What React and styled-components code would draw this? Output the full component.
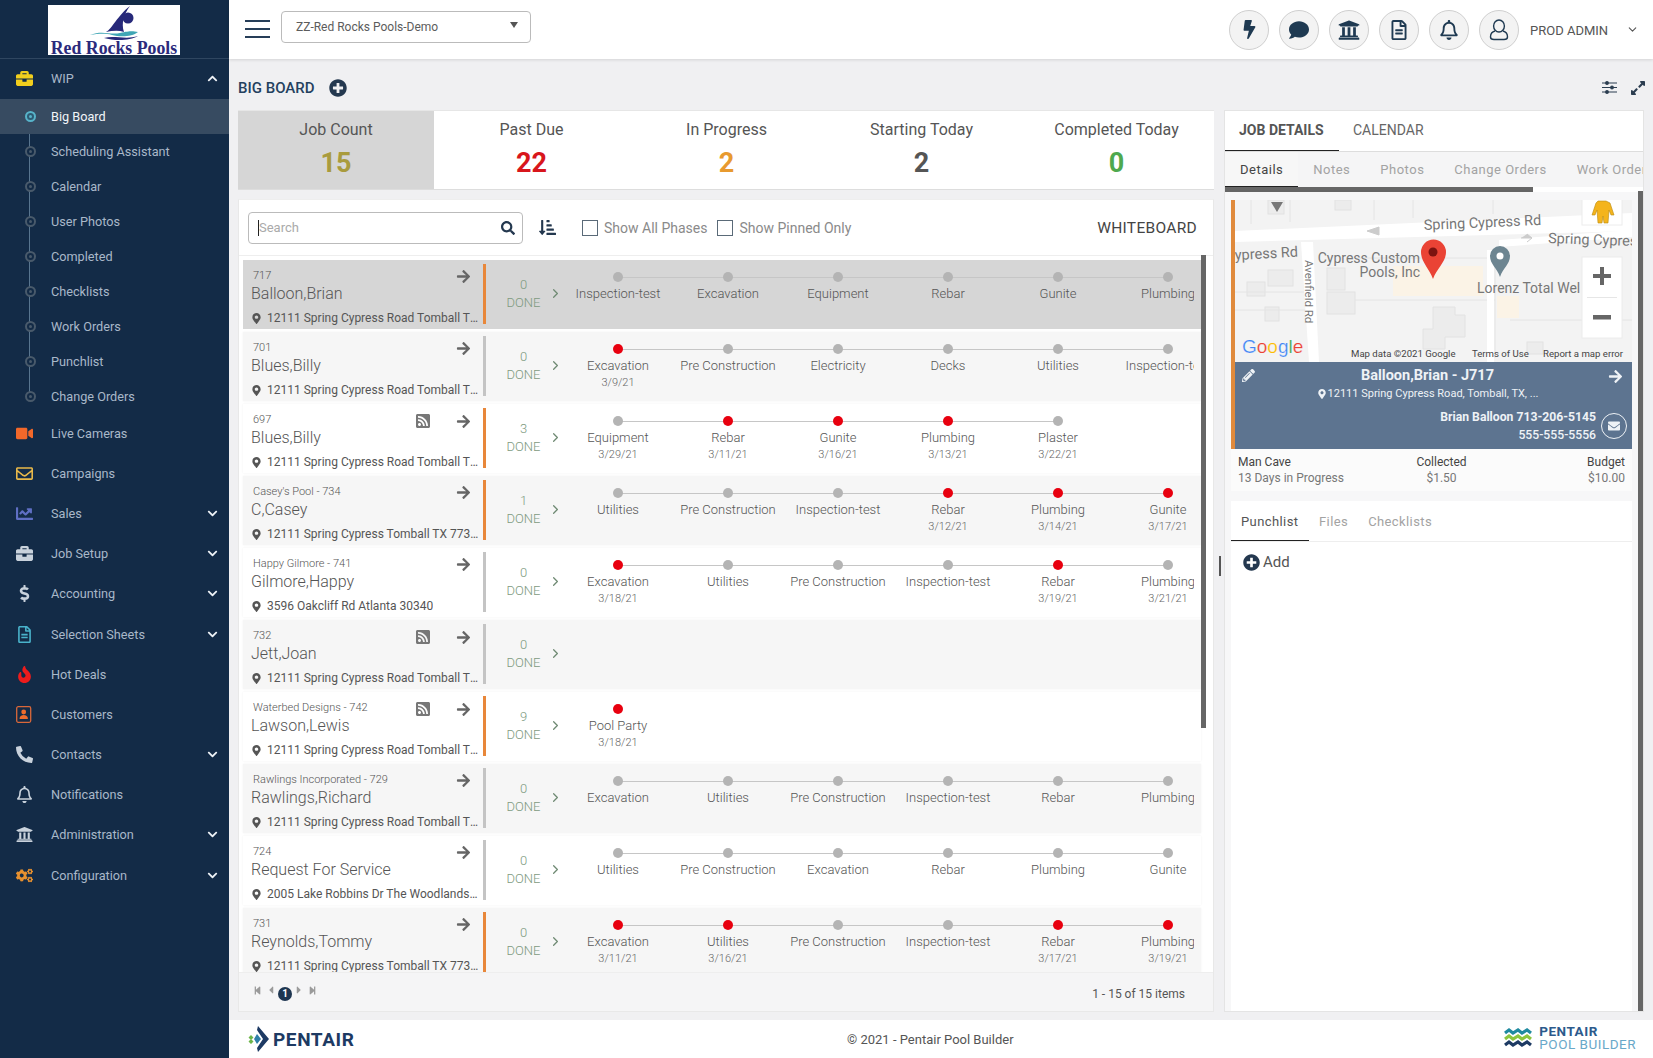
import React from "react";
import styled, { createGlobalStyle } from "styled-components";
import {
  FaBolt, FaComment, FaUniversity, FaRegFileAlt, FaRegBell, FaBriefcase, FaVideo, FaRegEnvelope,
  FaChartLine, FaDollarSign, FaFire, FaPhoneAlt, FaCogs, FaChevronUp, FaChevronDown,
  FaPlusCircle, FaSearch, FaSortAmountDownAlt, FaArrowRight, FaMapMarkerAlt, FaRssSquare, FaExpandAlt,
  FaPencilAlt, FaStepBackward, FaStepForward, FaCaretLeft, FaCaretRight, FaEnvelope,
} from "react-icons/fa";
import { FiChevronDown, FiChevronRight } from "react-icons/fi";

const Global = createGlobalStyle`
  html, body { margin: 0; padding: 0; height: 100%; overflow: hidden; }
  body { font-family: Roboto, "Liberation Sans", sans-serif; background: #f0f0f2; }
  * { box-sizing: border-box; }
`;

const Shell = styled.div`
  display: grid; grid-template-columns: 229px 1fr; grid-template-rows: 1058px; width: 1653px; height: 1058px; overflow: hidden;
`;
const Side = styled.aside`background: #132b47; display: flex; flex-direction: column; color: #a9b8c9; min-height: 0; overflow: hidden;`;
const LogoBar = styled.div`
  height: 59px; flex: none; border-bottom: 1px solid #2f4660; padding: 5px 0 0 48px;
`;
const LogoBox = styled.div`
  width: 132px; height: 50px; background: #fff; display: flex; flex-direction: column; align-items: center;
  svg { display: block; flex: none; }
`;
const LogoText = styled.div`
  font-family: "Liberation Serif", serif; font-weight: 700; font-size: 17.800px; line-height: 14px; color: #2b2a7c; white-space: nowrap;
`;
const NavItem = styled.div`
  height: ${p => p.$h || 40.2}px; flex: none; display: flex; align-items: center; padding: 0 11px ${p => p.$pb || 0}px 16px; font-size: 12.7px;
`;
const NavIcon = styled.span`
  width: 35px; display: flex; align-items: center; justify-content: flex-start; font-size: 17px; color: ${p => p.$c};
`;
const NavLabel = styled.span`flex: 1;`;
const Chev = styled.span`display: flex; font-size: 11px; color: #eef2f6;`;
const SubNav = styled.div`
  position: relative; flex: none; margin-bottom: -1px;
  &::before { content: ""; position: absolute; left: 29px; top: 17px; bottom: 17px; width: 1px; background: #58758f; }
`;
const SubItem = styled.div`
  height: 35px; display: flex; align-items: center; padding-left: 25px; gap: 15px; font-size: 12.7px;
  position: relative;
  background: ${p => p.$active ? "#374b61" : "transparent"};
  color: ${p => p.$active ? "#f2f5f8" : "#a9b8c9"};
`;
const SubDot = styled.i`
  width: 11px; height: 11px; border-radius: 50%; position: relative; z-index: 1;
  border: 2px solid ${p => p.$active ? "#57b3c9" : "#495a6b"};
  background: ${p => p.$active ? "#2e5b74" : "#132b47"};
  &::after { content: ""; position: absolute; left: 2px; top: 2px; width: 3px; height: 3px; border-radius: 50%; background: ${p => p.$active ? "#57b3c9" : "#495a6b"}; }
`;

const Main = styled.div`display: flex; flex-direction: column; min-width: 0; min-height: 0;`;
const Header = styled.header`
  height: 59px; flex: none; background: #fff; display: flex; align-items: center; padding: 0 14px 0 16px; box-shadow: 0 1px 3px rgba(0,0,0,.12); z-index: 2;
`;
const Burger = styled.div`
  width: 25px; height: 18px; display: flex; flex-direction: column; justify-content: space-between; margin: -2px 11px 0 0;
  i { display: block; height: 2px; background: #263e58; }
`;
const Select = styled.div`
  width: 250px; height: 32px; border: 1px solid #bbb; border-radius: 4px; display: flex; align-items: center; justify-content: space-between; padding: 0 12px 0 14px; font-size: 12px; color: #5c5c5c; margin-top: -5px;
`;
const Caret = styled.i`
  width: 0; height: 0; border-left: 4px solid transparent; border-right: 4px solid transparent; border-top: 6px solid #555; margin-top: -5px;
`;
const HeadRight = styled.div`margin-left: auto; display: flex; align-items: center; gap: 10px;`;
const Round = styled.div`
  width: 40px; height: 40px; border-radius: 50%; background: #f3f3f3; border: 1px solid #cfcfcf; display: flex; align-items: center; justify-content: center; color: #1f3a52; font-size: ${p => p.$s || 20}px;
`;
const User = styled.span`font-size: 13px; color: #555; margin: 2px 0 0 1px; width: 86px; display: inline-block;`;

const Content = styled.div`flex: 1; min-height: 0; display: flex; flex-direction: column; padding: 0 9px 8px 9px; overflow: hidden;`;
const TitleBar = styled.div`height: 51px; flex: none; display: flex; align-items: center; padding-top: 6px; font-size: 15px; font-weight: 500; color: #24415f;`;
const PlusBtn = styled.span`display: flex; margin-left: 14px; font-size: 18px; color: #24384f;`;
const Tools = styled.div`margin-left: auto; display: flex; align-items: center; gap: 13px; margin-right: -2px; color: #2b3d50; font-size: 16px;`;

const Columns = styled.div`flex: 1; min-height: 0; display: grid; grid-template-columns: 976px 420px; gap: 10px; position: relative;`;
const Grip = styled.i`position: absolute; left: 980.5px; top: 446px; width: 2px; height: 20px; background: #555;`;
const Left = styled.div`display: flex; flex-direction: column; gap: 9px; min-height: 0;`;
const Stats = styled.div`display: grid; grid-template-columns: 196px repeat(4, 1fr); height: 80px; background: #fff; border-bottom: 1px solid #ddd; flex: none; border-top: 1px solid #e6e6e6;`;
const Stat = styled.div`
  display: flex; flex-direction: column; align-items: center; padding-top: 7px; background: ${p => p.$on ? "#d6d6d6" : "transparent"};
`;
const StatLabel = styled.div`font-size: 16px; line-height: 24px; color: #555;`;
const StatNum = styled.div`font-size: 27px; line-height: 36px; font-weight: 700; color: ${p => p.$c}; margin-top: 3px;`;
const Board = styled.div`flex: 1; min-height: 0; background: #fff; display: flex; flex-direction: column; position: relative; border: 1px solid #e8e8e8; border-top: 1px solid #eee;`;
const Toolbar = styled.div`height: 56px; flex: none; display: flex; align-items: center; padding: 0 16px 0 9px; border-bottom: 1px solid #eee;`;
const SearchBox = styled.div`
  width: 275px; height: 32px; border: 1px solid #bbb; border-radius: 4px; display: flex; align-items: center; justify-content: space-between; padding: 0 7px 0 9px; font-size: 13px; color: #222;
`;
const Placeholder = styled.span`color: #aaa; border-left: 1px solid #222; line-height: 16px; font-size: 13px;`;
const SortBtn = styled.span`display: flex; margin: 0 26px 0 16px; font-size: 17px; color: #24384f;`;
const Check = styled.i`width: 16px; height: 16px; border: 1px solid #5a6a78; background: #fff; display: block; margin-right: 6px;`;
const CheckLabel = styled.span`font-size: 14px; color: #8a8a8a; margin-right: ${p => p.$mr || 0}px;`;
const WB = styled.span`margin-left: auto; font-size: 15.5px; color: #444; letter-spacing: .3px;`;
const List = styled.div`flex: 1; min-height: 0; overflow: hidden; padding: 4px 12px 0 4px;`;
const Row = styled.div`
  height: 69px; margin-bottom: 3px; display: flex; background: ${p => p.$bg}; box-shadow: ${p => p.$sel ? "none" : "0 0 2px rgba(0,0,0,.06)"};
`;
const Info = styled.div`width: 240px; flex: none; padding: 9px 2px 0 8px; position: relative; min-width: 0;`;
const Num = styled.div`font-size: 11px; line-height: 14px; color: #555; padding-left: 2px; height: 14px; font-weight: 300;`;
const Name = styled.div`font-size: 16px; line-height: 22px; color: #555; font-weight: 300; margin-top: 0;`;
const Addr = styled.div`display: flex; align-items: center; gap: 5px; font-size: 12px; line-height: 16px; color: #555; margin-top: 5px; width: 229px; white-space: nowrap;
  svg { flex: none; font-size: 11px; color: #555; }
  span { overflow: hidden; text-overflow: ellipsis; }
`;
const RowIcons = styled.div`position: absolute; right: 12px; top: 9px; display: flex; align-items: center; gap: 25px; font-size: 15px; color: #666;
  svg:first-child:not(:last-child) { color: #777; font-size: 16px; }
`;
const Bar = styled.i`width: 3px; height: 60px; margin-top: 4px; background: ${p => p.$c}; flex: none;`;
const Done = styled.div`
  width: 77px; flex: none; display: flex; align-items: center; padding-left: 12px; color: #7e9a80; font-size: 13px; font-weight: 300;
`;
const DoneText = styled.div`width: 57px; text-align: center; line-height: 18px; margin-top: -1px;`;
const DoneChev = styled.span`display: flex; font-size: 15px; color: #6f8a73; margin-left: -1px; margin-top: -2px;`;
const Timeline = styled.div`flex: 1; min-width: 0; display: flex; overflow: hidden; margin-right: 7px;`;
const Stage = styled.div`
  width: 110px; flex: none; position: relative; text-align: center; padding-top: 26px; font-size: 13px; line-height: 16px; color: #555; font-weight: 300;
  white-space: nowrap;
  &::before { content: ""; position: absolute; left: 50%; top: 12px; width: 10px; height: 10px; margin-left: -5px; border-radius: 50%; background: ${p => p.$red ? "#e8000f" : "#b4b4b4"}; z-index: 1; }
  &:not(:last-child)::after { content: ""; position: absolute; left: 50%; top: 17px; width: 110px; height: 1px; background: #c6c6c6; }
`;
const StageName = styled.div`height: 17px;`;
const StageDate = styled.div`font-size: 11px; color: #666; line-height: 16px; margin-top: 0;`;
const ScrollThumb = styled.i`position: absolute; right: 7px; top: 55px; width: 5px; height: 473px; background: #666;`;
const Pager = styled.div`height: 39px; flex: none; display: flex; align-items: center; padding: 4px 28px 0 14px; background: #f5f5f6; border-top: 1px solid #eee; font-size: 12px; color: #555;`;
const PageIcons = styled.div`display: flex; align-items: center; gap: 3px; font-size: 9px; color: #9a9a9a; margin-top: -8px;`;
const PageNum = styled.span`width: 14px; height: 14px; border-radius: 50%; background: #1e3550; color: #fff; font-size: 10px; font-weight: 700; display: flex; align-items: center; justify-content: center; margin: 7px -2px 0 -2px;`;
const PageInfo = styled.span`margin-left: auto;`;

const Right = styled.div`background: #f7f7f8; display: flex; flex-direction: column; position: relative; min-height: 0; border: 1px solid #e4e4e4;`;
const RightThumb = styled.i`position: absolute; right: 0; top: 80px; width: 5px; bottom: 0; background: #666;`;
const TopTabs = styled.div`height: 41px; flex: none; display: flex; background: #fff; border-bottom: 1px solid #ddd;`;
const TopTab = styled.div`
  padding: 0 15px 3px 14px; display: flex; align-items: center; font-size: 14px; color: ${p => p.$on ? "#555" : "#666"}; font-weight: ${p => p.$on ? 700 : 400};
  ${p => p.$on ? "box-shadow: inset 0 -1px 0 #222; width: 114px;" : ""}
`;
const SubTabs = styled.div`height: 35px; flex: none; display: flex; background: #f5f5f6; overflow: hidden; white-space: nowrap;`;
const SubTab = styled.div`
  padding: 0 15px; display: flex; align-items: center; font-size: 13px; letter-spacing: .5px; color: ${p => p.$on ? "#444" : "#a3a3a3"};
  ${p => p.$on ? "box-shadow: inset 0 -1px 0 #222; background: #f7f7f7;" : ""}
`;
const HBar = styled.div`height: 5px; flex: none; background: #fff; &::after { content: ""; display: block; width: 308px; height: 5px; background: #666; }`;
const Pane = styled.div`flex: 1; min-height: 0; display: flex; flex-direction: column; padding: 8px 11px 0 6px;`;
const JobCard = styled.div`border-left: 4px solid #e08a3c; flex: none;`;
const MapBox = styled.div`height: 162px; overflow: hidden; background: #f4f4f4; svg { display: block; }`;
const Blue = styled.div`height: 87px; background: #5d7490; color: #eef2f6; padding: 4px 4px 0 5px;`;
const BlueTop = styled.div`display: flex; align-items: flex-start; justify-content: space-between; font-size: 14px;`;
const BlueMid = styled.div`flex: 1; text-align: center; padding-right: 8px;`;
const BlueTitle = styled.div`font-size: 14.5px; font-weight: 700; line-height: 19px;`;
const BlueAddr = styled.div`font-size: 11px; line-height: 17px; display: flex; align-items: center; justify-content: center; gap: 1px;`;
const BlueBottom = styled.div`display: flex; justify-content: flex-end; align-items: center; gap: 5px; margin-top: 6px; padding-right: 1px;`;
const Contact = styled.div`text-align: right; font-size: 12.200px; line-height: 18px; font-weight: 500;
  b { font-weight: 700; }
`;
const Mail = styled.span`width: 26px; height: 26px; border-radius: 50%; border: 1px solid #eef2f6; display: flex; align-items: center; justify-content: center; font-size: 12px; flex: none;`;
const JobInfo = styled.div`height: 42px; flex: none; background: #fbfbfb; padding: 5px 7px 0 7px; display: flex; justify-content: space-between; font-size: 12px; line-height: 16px; color: #444;`;
const InfoCol = styled.div`text-align: ${p => p.$a}; width: ${p => p.$w}px; div + div { color: #777; }`;
const Punch = styled.div`flex: 1; min-height: 0; background: #fff; margin-top: 10px;`;
const PunchTabs = styled.div`height: 41px; display: flex; border-bottom: 1px solid #eee;`;
const PunchTab = styled.div`padding: 0 10px; display: flex; align-items: center; font-size: 13px; letter-spacing: .4px; color: ${p => p.$on ? "#555" : "#a3a3a3"};
  ${p => p.$on ? "box-shadow: inset 0 -1px 0 #222; padding: 0 9px 0 10px; width: 78px;" : ""}
`;
const AddRow = styled.div`display: flex; align-items: center; gap: 3px; padding: 11px 12px; font-size: 15px; color: #555; svg { font-size: 17px; color: #24384f; }`;

const Footer = styled.footer`height: 38px; flex: none; background: #fff; display: flex; align-items: center; padding: 0 17px 0 19px;`;
const PentairWord = styled.div`display: flex; align-items: center; gap: 3px; font-size: 19px; font-weight: 700; color: #1d3a63; letter-spacing: .6px; flex: none; width: 108px;`;
const Copy = styled.span`font-size: 13px; color: #555; margin-left: 491px;`;
const PoolLogo = styled.div`display: flex; align-items: center; gap: 6px; margin: -3px 0 0 auto;`;
const PoolText = styled.div`font-size: 13.5px; line-height: 13px; letter-spacing: .5px; font-weight: 700; color: #2c5a8c; span { display: block; font-weight: 400; color: #69a8c9; }`;

const AddressIcon = () => (
  <svg width="16" height="17" viewBox="0 0 16 17">
    <rect x=".7" y=".7" width="14" height="15.600" rx="1.500" fill="none" stroke="#d9673a" strokeWidth="1.300" />
    <circle cx="7.700" cy="6" r="2.400" fill="#ee6c2d" />
    <path d="M3.500 13c0-3 2-4 4.200-4s4.200 1 4.200 4z" fill="#ee6c2d" />
  </svg>
);
const nav1 = [
  [FaVideo, "#f2682a", "Live Cameras"], [FaRegEnvelope, "#e9b94a", "Campaigns"], [FaChartLine, "#5f6fc4", "Sales", 1],
  [FaBriefcase, "#c9d2dc", "Job Setup", 1], [FaDollarSign, "#c9d2dc", "Accounting", 1], [FaRegFileAlt, "#49b2cb", "Selection Sheets", 1],
  [FaFire, "#ee1c1c", "Hot Deals"], [AddressIcon, "#e8692f", "Customers"], [FaPhoneAlt, "#c9d2dc", "Contacts", 1],
  [FaRegBell, "#c9d2dc", "Notifications"], [FaUniversity, "#c9d2dc", "Administration", 1], [FaCogs, "#e8912f", "Configuration", 1],
];
const subs = ["Big Board", "Scheduling Assistant", "Calendar", "User Photos", "Completed", "Checklists", "Work Orders", "Punchlist", "Change Orders"];
const s = (n, d, r) => ({ n, d, r });
const S1 = "12111 Spring Cypress Road Tomball TX 77375";
const S2 = "12111 Spring Cypress Tomball TX 77375";
const jobs = [
  { no: "717", name: "Balloon,Brian", addr: S1, bar: "#e8873a", done: 0, st: ["Inspection-test", "Excavation", "Equipment", "Rebar", "Gunite", "Plumbing"].map(x => s(x)) },
  { no: "701", name: "Blues,Billy", addr: S1, bar: "#c4c4c4", done: 0, st: [s("Excavation", "3/9/21", 1), s("Pre Construction"), s("Electricity"), s("Decks"), s("Utilities"), s("Inspection-test")] },
  { no: "697", name: "Blues,Billy", addr: S1, bar: "#e8873a", done: 3, rss: 1, st: [s("Equipment", "3/29/21"), s("Rebar", "3/11/21", 1), s("Gunite", "3/16/21", 1), s("Plumbing", "3/13/21", 1), s("Plaster", "3/22/21")] },
  { no: "Casey's Pool - 734", name: "C,Casey", addr: S2, bar: "#e8873a", done: 1, st: [s("Utilities"), s("Pre Construction"), s("Inspection-test"), s("Rebar", "3/12/21", 1), s("Plumbing", "3/14/21", 1), s("Gunite", "3/17/21", 1)] },
  { no: "Happy Gilmore - 741", name: "Gilmore,Happy", addr: "3596 Oakcliff Rd Atlanta 30340", bar: "#c4c4c4", done: 0, st: [s("Excavation", "3/18/21", 1), s("Utilities"), s("Pre Construction"), s("Inspection-test"), s("Rebar", "3/19/21", 1), s("Plumbing", "3/21/21")] },
  { no: "732", name: "Jett,Joan", addr: S1, bar: "#c4c4c4", done: 0, rss: 1, st: [] },
  { no: "Waterbed Designs - 742", name: "Lawson,Lewis", addr: S1, bar: "#e8873a", done: 9, rss: 1, st: [s("Pool Party", "3/18/21", 1)] },
  { no: "Rawlings Incorporated - 729", name: "Rawlings,Richard", addr: S1, bar: "#c4c4c4", done: 0, st: ["Excavation", "Utilities", "Pre Construction", "Inspection-test", "Rebar", "Plumbing"].map(x => s(x)) },
  { no: "724", name: "Request For Service", addr: "2005 Lake Robbins Dr The Woodlands TX 77380", bar: "#c4c4c4", done: 0, st: ["Utilities", "Pre Construction", "Excavation", "Rebar", "Plumbing", "Gunite"].map(x => s(x)) },
  { no: "731", name: "Reynolds,Tommy", addr: S2, bar: "#e8873a", done: 0, st: [s("Excavation", "3/11/21", 1), s("Utilities", "3/16/21", 1), s("Pre Construction"), s("Inspection-test"), s("Rebar", "3/17/21", 1), s("Plumbing", "3/19/21", 1)] },
];
const stats = [["Job Count", "15", "#a99b3d", 1], ["Past Due", "22", "#d8161c"], ["In Progress", "2", "#e89a2f"], ["Starting Today", "2", "#555"], ["Completed Today", "0", "#4fa94f"]];

const Swimmer = () => (
  <svg width="132" height="36" viewBox="0 0 132 36">
    <path d="M58 27 C64 24 70 10 82 1 C76 9 73 18 76 27 C70 25 64 26 58 27Z" fill="#27297a" />
    <circle cx="80" cy="13" r="5.500" fill="#27297a" />
    <path d="M42 30 C54 25 62 30 72 28 S84 26 90 27 C84 32 72 32 64 30 S50 29 42 30Z" fill="#3fa6b5" />
    <path d="M56 33 C66 30 78 35 90 31 C82 36 66 36 56 33Z" fill="#27297a" />
  </svg>
);
const MapArt = () => (
  <svg width="397" height="162" viewBox="0 0 397 162" fontFamily="Roboto, sans-serif">
    <rect width="397" height="162" fill="#f3f3f3" />
    <g fill="#ececec" stroke="#e2e2e2">
      <rect x="33" y="70" width="25" height="16" /><rect x="12" y="82" width="18" height="14" /><rect x="30" y="107" width="14" height="14" />
      <rect x="92" y="68" width="18" height="22" /><rect x="92" y="92" width="28" height="22" />
      <path d="M198 107h22v8h10v22h-20v12h-22v-20h10z" /><rect x="292" y="142" width="16" height="12" /><rect x="100" y="0" width="16" height="10" />
      <rect x="33" y="0" width="16" height="14" />
    </g>
    <g fill="none" stroke="#e4e4e4">
      <path d="M16 0v24M55 0v22M139 0v20M178 0v18M258 0v14M120 100h140M120 58h140v100M275 120h122M0 92l70 0M0 110h70" />
    </g>
    <rect x="158" y="66" width="90" height="30" fill="#fbf3e6" />
    <rect x="262" y="96" width="22" height="22" fill="#fbf3e6" />
    <path d="M0 31 L397 13 V31 L0 42 Z" fill="#fff" />
    <path d="M264 47 L397 37 V30 L264 40Z" fill="#fff" />
    <path d="M66 42 H78 L84 162 H74 Z" fill="#fff" />
    <path d="M252 50h7V162h-7Z" fill="#fff" />
    <path d="M132 31 L144 27 V35Z M286 38 L297 38 L292 34 M292 42 L297 38" fill="#ccc" stroke="#ccc" />
    <path d="M36 2 h12 l-6 10Z" fill="#777" />
    <g fill="#777">
      <text x="189" y="30" transform="rotate(-2.5 189 30)" fontSize="14.500">Spring Cypress Rd</text>
      <text x="313" y="43" transform="rotate(2 313 43)" fontSize="14.500">Spring Cypres</text>
      <text x="0" y="60" transform="rotate(-3 0 60)" fontSize="14.500">ypress Rd</text>
      <text x="185" y="63" textAnchor="end" fontSize="14">Cypress Custom</text>
      <text x="185" y="77" textAnchor="end" fontSize="14">Pools, Inc</text>
      <text x="242" y="93" fontSize="14">Lorenz Total Wel</text>
      <text x="70" y="60" transform="rotate(90 70 60)" fontSize="11.500">Avenfield Rd</text>
    </g>
    <path d="M198 79 C194 68 186 62 186 52 A12.500 12.500 0 0 1 211 52 C211 62 202 68 198 79Z" fill="#ea4335" />
    <circle cx="198" cy="52" r="4.500" fill="#7c1310" />
    <path d="M265 77 C262 68 255 64 255 56 A10 10 0 0 1 275 56 C275 64 268 68 265 77Z" fill="#6d8591" />
    <circle cx="265" cy="56" r="3.500" fill="#fff" />
    <rect x="347" y="-4" width="40" height="29" fill="#fff" stroke="#ececec" />
    <path d="M363 1h8l4 2 4 12h-3l-2-5-1 13h-4l-1-7-1 7h-4l-1-13-2 5h-3l4-12z" fill="#f4b41c" stroke="#b98a10" strokeWidth=".6" />
    <rect x="347" y="57" width="40" height="81" fill="#fff" stroke="#ececec" />
    <rect x="352" y="97" width="30" height="1" fill="#e6e6e6" />
    <path d="M365 67h4v7h7v4h-7v7h-4v-7h-7v-4h7z" fill="#666" />
    <rect x="358" y="115" width="18" height="4.500" fill="#666" />
    <text x="7" y="153" fontSize="19" fontFamily="Liberation Sans, sans-serif" fontWeight="400" stroke="#fff" strokeWidth=".2">
      <tspan fill="#4285f4">G</tspan><tspan fill="#ea4335">o</tspan><tspan fill="#fbbc05">o</tspan><tspan fill="#4285f4">g</tspan><tspan fill="#34a853">l</tspan><tspan fill="#ea4335">e</tspan>
    </text>
    <g fontSize="9.600" fill="#444">
      <text x="116" y="157">Map data ©2021 Google</text>
      <text x="237" y="157">Terms of Use</text>
      <text x="308" y="157">Report a map error</text>
    </g>
  </svg>
);

export default function App() {
  return (
    <Shell>
      <Global />
      <Side>
        <LogoBar>
          <LogoBox>
            <Swimmer />
            <LogoText>Red Rocks Pools</LogoText>
          </LogoBox>
        </LogoBar>
        <NavItem $h={40} $pb={2}>
          <NavIcon $c="#f2cf1d"><FaBriefcase /></NavIcon>
          <NavLabel>WIP</NavLabel>
          <Chev><FaChevronUp /></Chev>
        </NavItem>
        <SubNav>
          {subs.map((x, i) => (
            <SubItem key={x} $active={i === 0}><SubDot $active={i === 0} />{x}</SubItem>
          ))}
        </SubNav>
        {nav1.map(([I, c, t, ch]) => (
          <NavItem key={t}>
            <NavIcon $c={c}><I /></NavIcon>
            <NavLabel>{t}</NavLabel>
            {ch && <Chev><FaChevronDown /></Chev>}
          </NavItem>
        ))}
      </Side>
      <Main>
        <Header>
          <Burger><i /><i /><i /></Burger>
          <Select>ZZ-Red Rocks Pools-Demo<Caret /></Select>
          <HeadRight>
            <Round $s={19}><FaBolt /></Round>
            <Round><FaComment /></Round>
            <Round $s={22}><FaUniversity /></Round>
            <Round><FaRegFileAlt /></Round>
            <Round><FaRegBell /></Round>
            <Round>
              <svg width="20" height="22" viewBox="0 0 20 22" fill="none" stroke="#1f3a52" strokeWidth="1.400">
                <ellipse cx="10" cy="7" rx="5.400" ry="6" />
                <path d="M6 12 C2 13 1.500 16 1.500 18 C1.500 20 3 20.500 5 20.500 H15 C17 20.500 18.500 20 18.500 18 C18.500 16 18 13 14 12" />
              </svg>
            </Round>
            <User>PROD ADMIN</User>
            <FiChevronDown size={13} color="#555" />
          </HeadRight>
        </Header>
        <Content>
          <TitleBar>
            BIG BOARD
            <PlusBtn><FaPlusCircle /></PlusBtn>
            <Tools>
              <svg width="15" height="13" viewBox="0 0 15 13" stroke="#2b3d50" strokeWidth="1.200" fill="#2b3d50">
                <path d="M0 2h15M0 6.500h15M0 11h15" /><circle cx="5" cy="2" r="1.300" /><circle cx="10" cy="6.500" r="1.300" /><circle cx="5" cy="11" r="1.300" />
              </svg>
              <FaExpandAlt />
            </Tools>
          </TitleBar>
          <Columns>
            <Left>
              <Stats>
                {stats.map(([l, n, c, on]) => (
                  <Stat key={l} $on={on}>
                    <StatLabel>{l}</StatLabel>
                    <StatNum $c={c}>{n}</StatNum>
                  </Stat>
                ))}
              </Stats>
              <Board>
                <Toolbar>
                  <SearchBox>
                    <Placeholder>Search</Placeholder>
                    <FaSearch size={14} color="#24384f" />
                  </SearchBox>
                  <SortBtn><FaSortAmountDownAlt /></SortBtn>
                  <Check /><CheckLabel $mr={10}>Show All Phases</CheckLabel>
                  <Check /><CheckLabel>Show Pinned Only</CheckLabel>
                  <WB>WHITEBOARD</WB>
                </Toolbar>
                <List>
                  {jobs.map((j, i) => (
                    <Row key={j.no} $sel={i === 0} $bg={i === 0 ? "#d6d6d6" : i % 2 ? "#f6f6f6" : "#fff"}>
                      <Info>
                        <Num>{j.no}</Num>
                        <Name>{j.name}</Name>
                        <Addr><FaMapMarkerAlt /><span>{j.addr}</span></Addr>
                        <RowIcons>{j.rss && <FaRssSquare />}<FaArrowRight /></RowIcons>
                      </Info>
                      <Bar $c={j.bar} />
                      <Done>
                        <DoneText>{j.done}<br />DONE</DoneText>
                        <DoneChev><FiChevronRight /></DoneChev>
                      </Done>
                      <Timeline>
                        {j.st.map((x, k) => (
                          <Stage key={k} $red={x.r}>
                            <StageName>{x.n}</StageName>
                            {x.d && <StageDate>{x.d}</StageDate>}
                          </Stage>
                        ))}
                      </Timeline>
                    </Row>
                  ))}
                </List>
                <ScrollThumb />
                <Pager>
                  <PageIcons>
                    <FaStepBackward /><FaCaretLeft size={12} /><PageNum>1</PageNum><FaCaretRight size={12} /><FaStepForward />
                  </PageIcons>
                  <PageInfo>1 - 15 of 15 items</PageInfo>
                </Pager>
              </Board>
            </Left>
            <Right>
              <TopTabs>
                <TopTab $on>JOB DETAILS</TopTab>
                <TopTab>CALENDAR</TopTab>
              </TopTabs>
              <SubTabs>
                <SubTab $on>Details</SubTab><SubTab>Notes</SubTab><SubTab>Photos</SubTab><SubTab>Change Orders</SubTab><SubTab>Work Orders</SubTab>
              </SubTabs>
              <HBar />
              <Pane>
                <JobCard>
                  <MapBox><MapArt /></MapBox>
                  <Blue>
                    <BlueTop>
                      <FaPencilAlt size={13} style={{ marginTop: 3, marginLeft: 2 }} />
                      <BlueMid>
                        <BlueTitle>Balloon,Brian - J717</BlueTitle>
                        <BlueAddr><FaMapMarkerAlt size={10} />12111 Spring Cypress Road, Tomball, TX, ...</BlueAddr>
                      </BlueMid>
                      <FaArrowRight size={15} style={{ marginTop: 3, marginRight: 5 }} />
                    </BlueTop>
                    <BlueBottom>
                      <Contact><b>Brian Balloon 713-206-5145</b><br />555-555-5556</Contact>
                      <Mail><FaEnvelope /></Mail>
                    </BlueBottom>
                  </Blue>
                </JobCard>
                <JobInfo>
                  <InfoCol $a="left" $w={150}><div>Man Cave</div><div>13 Days in Progress</div></InfoCol>
                  <InfoCol $a="center" $w={70}><div>Collected</div><div>$1.50</div></InfoCol>
                  <InfoCol $a="right" $w={130}><div>Budget</div><div>$10.00</div></InfoCol>
                </JobInfo>
                <Punch>
                  <PunchTabs>
                    <PunchTab $on>Punchlist</PunchTab><PunchTab>Files</PunchTab><PunchTab>Checklists</PunchTab>
                  </PunchTabs>
                  <AddRow><FaPlusCircle />Add</AddRow>
                </Punch>
              </Pane>
              <RightThumb />
            </Right>
            <Grip />
          </Columns>
        </Content>
        <Footer>
          <PentairWord>
            <svg width="22" height="26" viewBox="0 0 22 26" style={{ flex: "none" }}>
              <path d="M10 0 L21 13 L10 26 L9 22 L15 13 L9 4Z" fill="#1d3a63" />
              <path d="M9 8 L13 13 L9 18 L6 13Z" fill="#2f7fa8" />
              <path d="M3 9l2.500 2.500L3 14 .5 11.500zM3 13l2.500 2.500L3 18 .5 15.500z" fill="#6db54a" />
            </svg>
            PENTAIR
          </PentairWord>
          <Copy>© 2021 - Pentair Pool Builder</Copy>
          <PoolLogo>
            <svg width="29" height="20" viewBox="0 0 29 20" fill="none" strokeWidth="3.200">
              <path d="M1 5 l4-3 4 3 5-3 4 3 5-3 4 3" stroke="#1f8aa0" />
              <path d="M1 11 l4-3 4 3 5-3 4 3 5-3 4 3" stroke="#8cc63f" />
              <path d="M1 17 l4-3 4 3 5-3 4 3 5-3 4 3" stroke="#1d3a63" />
            </svg>
            <PoolText>PENTAIR<span>POOL BUILDER</span></PoolText>
          </PoolLogo>
        </Footer>
      </Main>
    </Shell>
  );
}
